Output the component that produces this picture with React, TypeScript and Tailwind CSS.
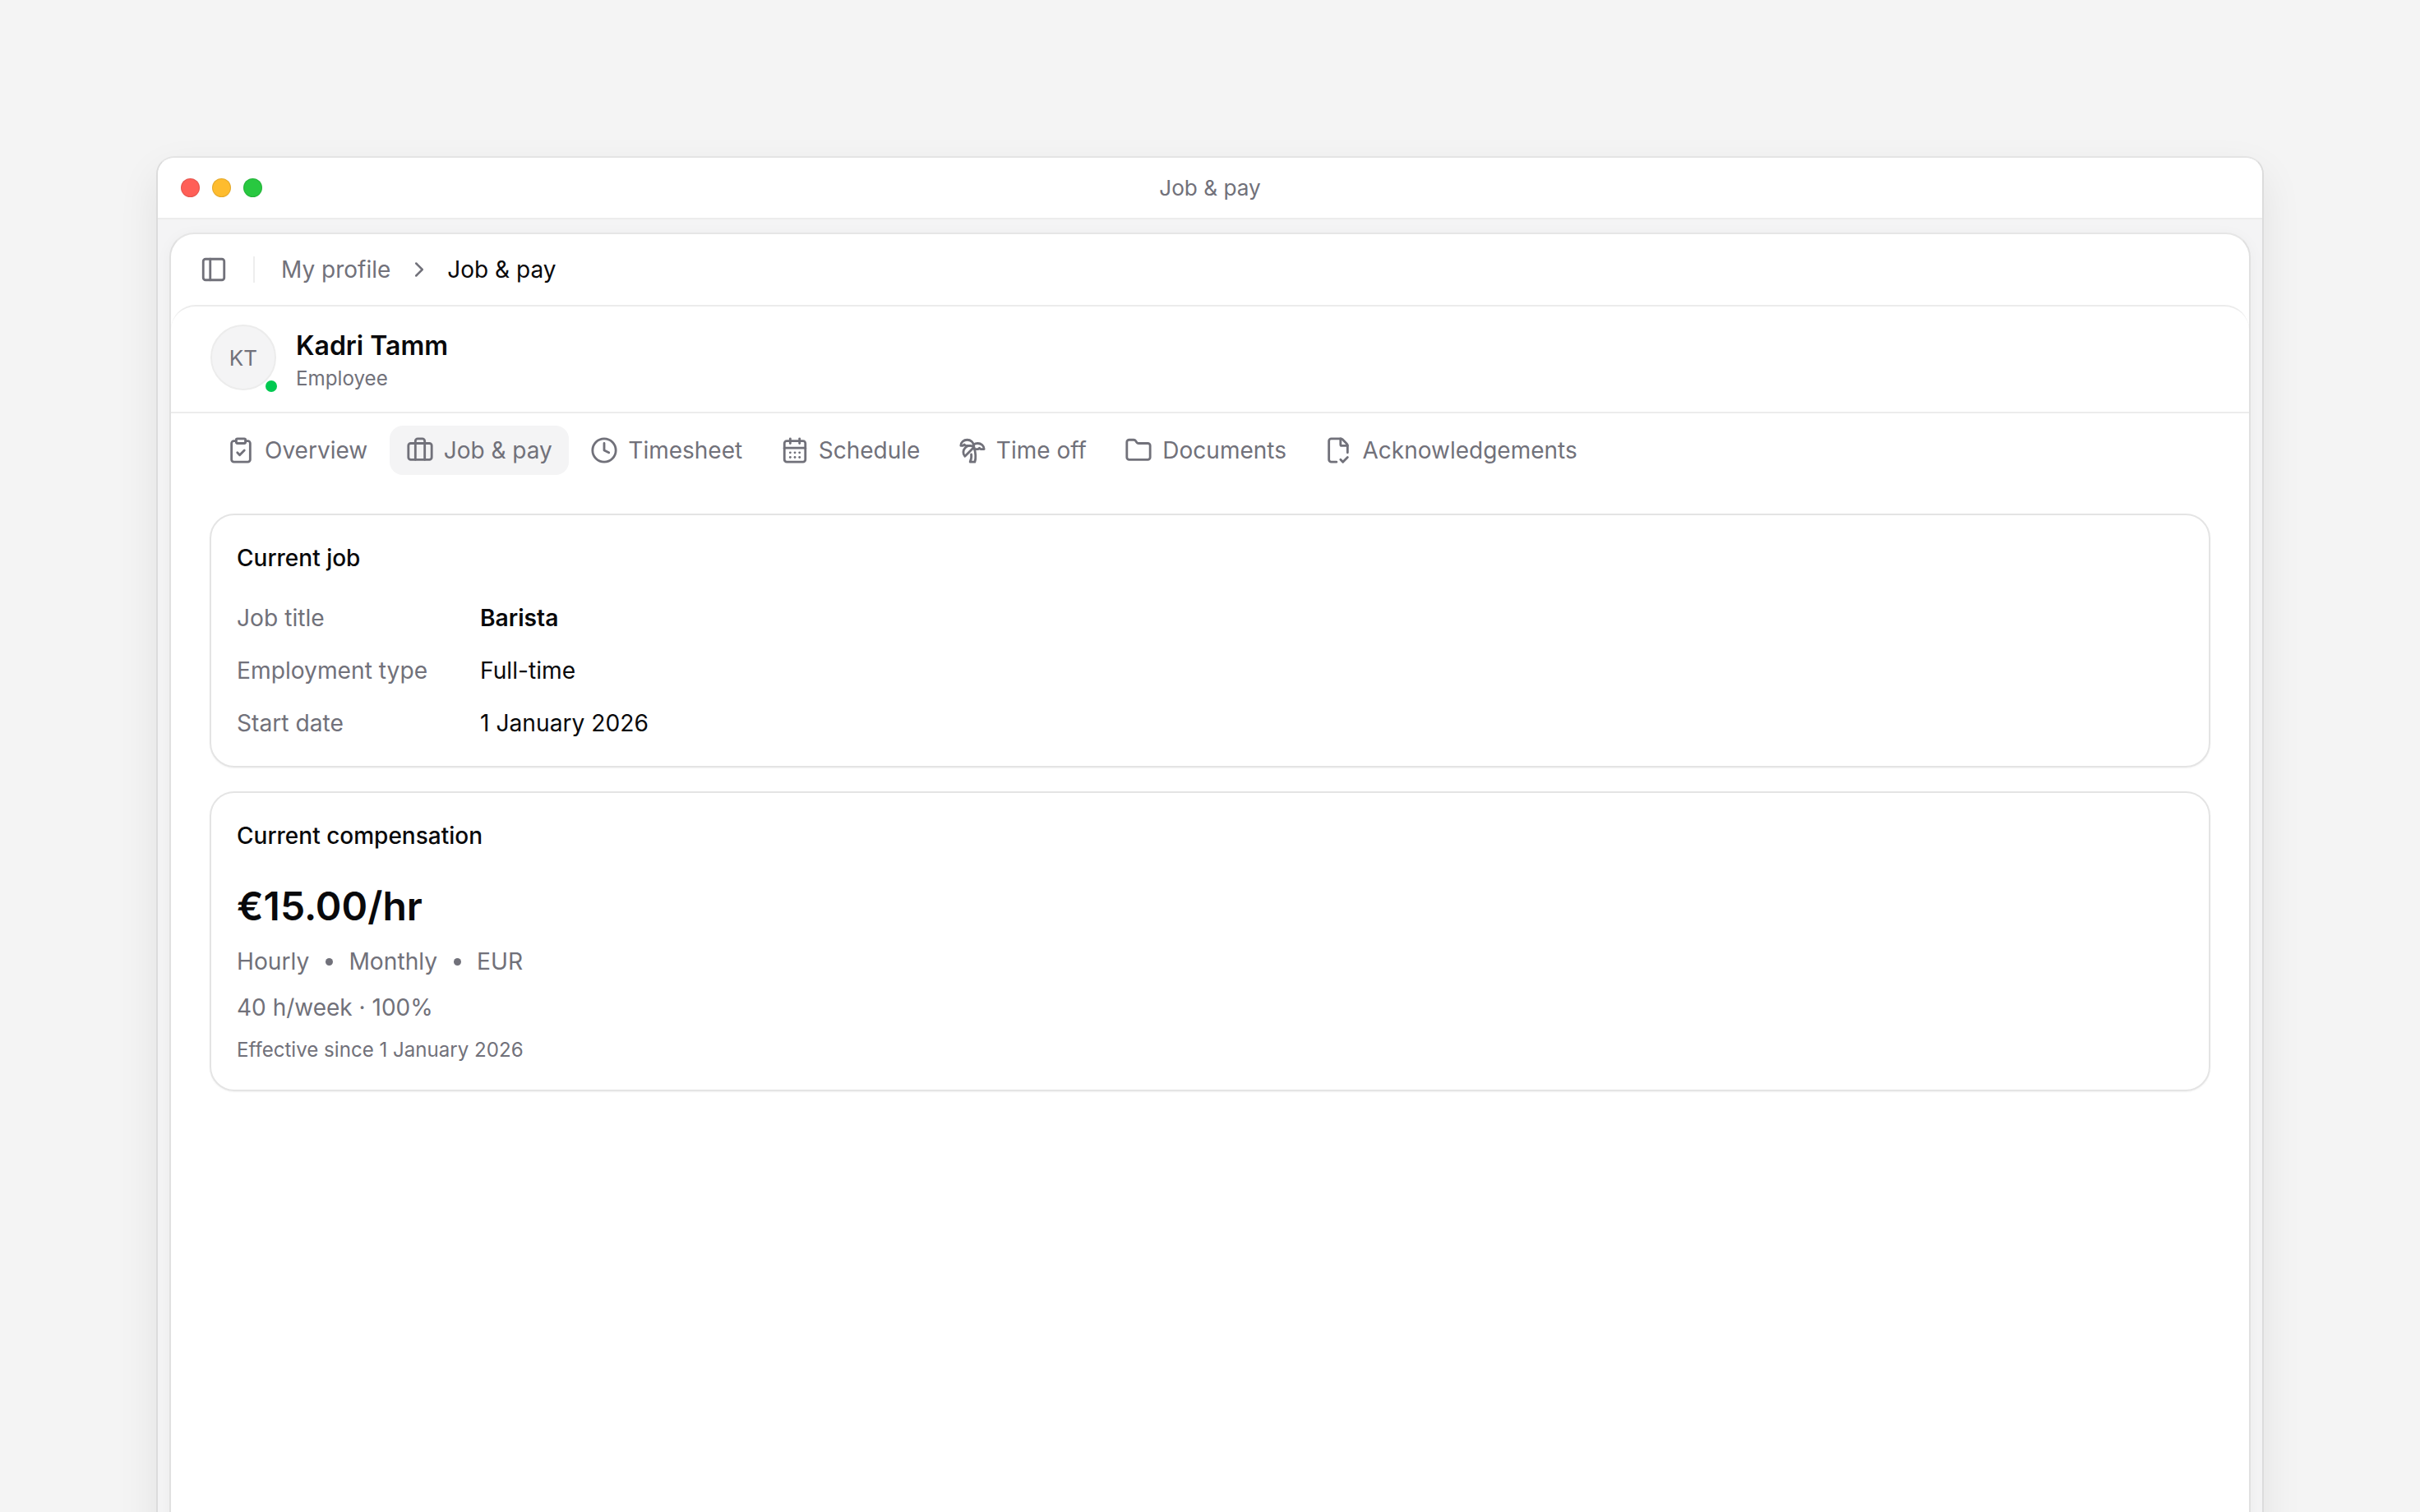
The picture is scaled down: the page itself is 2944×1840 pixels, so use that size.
import { Briefcase, CalendarDays, ChevronRight, ClipboardCheck, Clock, FileCheckCorner, Folder, PanelLeft, TreePalm } from "lucide-react";

const tabs = [
  { label: "Overview", icon: ClipboardCheck },
  { label: "Job & pay", icon: Briefcase, active: true },
  { label: "Timesheet", icon: Clock },
  { label: "Schedule", icon: CalendarDays },
  { label: "Time off", icon: TreePalm },
  { label: "Documents", icon: Folder },
  { label: "Acknowledgements", icon: FileCheckCorner },
];

export default function App() {
  return (
    <div className="h-[1840px] overflow-hidden bg-[#f4f4f4] px-[190px] pt-[190px] font-['Inter',sans-serif] text-[#09090b]">
      {/* WINDOW */}
      <div className="flex h-[1700px] flex-col rounded-t-[22px] border-2 border-b-0 border-[#dcdcdc] border-t-[#e4e4e4] bg-[#f4f4f5] shadow-[0_20px_50px_rgba(0,0,0,0.08)]">
        <div className="relative flex h-[75px] shrink-0 items-center gap-[15px] rounded-t-[20px] border-b-2 border-[#ececec] bg-white pl-[28px]">
          <span className="h-[23px] w-[23px] rounded-full border border-black/10 bg-[#ff5f57]" />
          <span className="h-[23px] w-[23px] rounded-full border border-black/10 bg-[#febc2e]" />
          <span className="h-[23px] w-[23px] rounded-full border border-black/10 bg-[#28c840]" />
          <span className="absolute inset-x-0 text-center text-[26.2px] text-[#71717a]">Job &amp; pay</span>
        </div>

        <div className="flex flex-1 flex-col px-[14px] pt-[16px]">
          {/* PANEL */}
          <div className="flex flex-1 flex-col rounded-t-[30px] border-2 border-b-0 border-[#e0e0e0] border-t-[#e6e6e6] bg-white shadow-[0_4px_20px_rgba(0,0,0,0.04)]">
            <div className="flex h-[86px] shrink-0 items-center pl-[35px]">
              <PanelLeft className="h-[34px] w-[34px] text-[#71717a]" strokeWidth={2} />
              <div className="ml-[31px] mr-[32px] h-[32px] w-[2px] bg-[#eeeeee]" />
              <span className="text-[28px] text-[#71717a]">My profile</span>
              <ChevronRight className="ml-[20px] mr-[19px] h-[30px] w-[30px] text-[#71717a]" strokeWidth={2} />
              <span className="text-[28px]">Job &amp; pay</span>
            </div>

            <div className="flex flex-1 flex-col rounded-t-[30px] border-t-2 border-[#ececec]">
              <div className="flex h-[130px] shrink-0 items-center gap-[24px] border-b-2 border-[#ececec] pl-[48px]">
                <div className="relative mb-[4px] flex h-[80px] w-[80px] items-center justify-center rounded-full border-2 border-[#ececec] bg-[#f4f4f5] text-[26px] text-[#71717a]">
                  KT
                  <span className="absolute bottom-[-4px] right-[-3px] h-[14px] w-[14px] rounded-full bg-[#00c950]" />
                </div>
                <div className="flex flex-col pt-[4px]">
                  <span className="text-[32px] font-semibold leading-[44px]">Kadri Tamm</span>
                  <span className="text-[24.2px] leading-[36px] text-[#71717a]">Employee</span>
                </div>
              </div>

              <div className="flex items-center gap-[6.5px] pl-[48px] pt-[15px]">
                {tabs.map((t) => (
                  <div
                    key={t.label}
                    className={
                      t.active
                        ? "flex h-[60px] items-center gap-[12px] rounded-[16px] bg-[#f4f4f5] px-[20px] text-[28px] text-[#71717a]"
                        : "flex h-[60px] items-center gap-[12px] rounded-[16px] px-[20px] text-[28px] text-[#71717a]"
                    }
                  >
                    <t.icon className="h-[34px] w-[34px]" strokeWidth={2} />
                    {t.label}
                  </div>
                ))}
              </div>

              {/* CARDS */}
              <div className="flex flex-col gap-[29px] px-[47px] pt-[47px]">
                <div className="flex h-[309px] flex-col rounded-[30px] border-2 border-[#e4e4e4] pl-[31px] pr-[32px] pt-[32px] shadow-[0_1px_2px_rgba(0,0,0,0.05)]">
                  <h2 className="text-[28px] font-medium leading-[40px]">Current job</h2>
                  <div className="mt-[33px] grid grid-cols-[296px_1fr] gap-y-[24px] text-[28.2px] leading-[40px]">
                    <span className="text-[#71717a]">Job title</span>
                    <span className="font-semibold">Barista</span>
                    <span className="text-[#71717a]">Employment type</span>
                    <span>Full-time</span>
                    <span className="text-[#71717a]">Start date</span>
                    <span>1 January 2026</span>
                  </div>
                </div>

                <div className="flex h-[365px] flex-col rounded-[30px] border-2 border-[#e4e4e4] pl-[31px] pr-[32px] pt-[32px] shadow-[0_1px_2px_rgba(0,0,0,0.05)]">
                  <h2 className="text-[28px] font-medium leading-[40px]">Current compensation</h2>
                  <div className="mt-[34px] text-[48px] font-semibold leading-[64px]">€15.00/hr</div>
                  <div className="mt-[15px] flex items-center gap-[19.5px] text-[28.2px] leading-[40px] text-[#71717a]">
                    <span>Hourly</span>
                    <span className="h-[9px] w-[9px] rounded-full bg-[#71717a]" />
                    <span>Monthly</span>
                    <span className="h-[9px] w-[9px] rounded-full bg-[#71717a]" />
                    <span>EUR</span>
                  </div>
                  <div className="mt-[16px] text-[28px] leading-[40px] text-[#71717a]">40 h/week · 100%</div>
                  <div className="mt-[14px] text-[24.1px] leading-[36px] text-[#71717a]">Effective since 1 January 2026</div>
                </div>
              </div>
            </div>
          </div>
        </div>
      </div>
    </div>
  );
}
